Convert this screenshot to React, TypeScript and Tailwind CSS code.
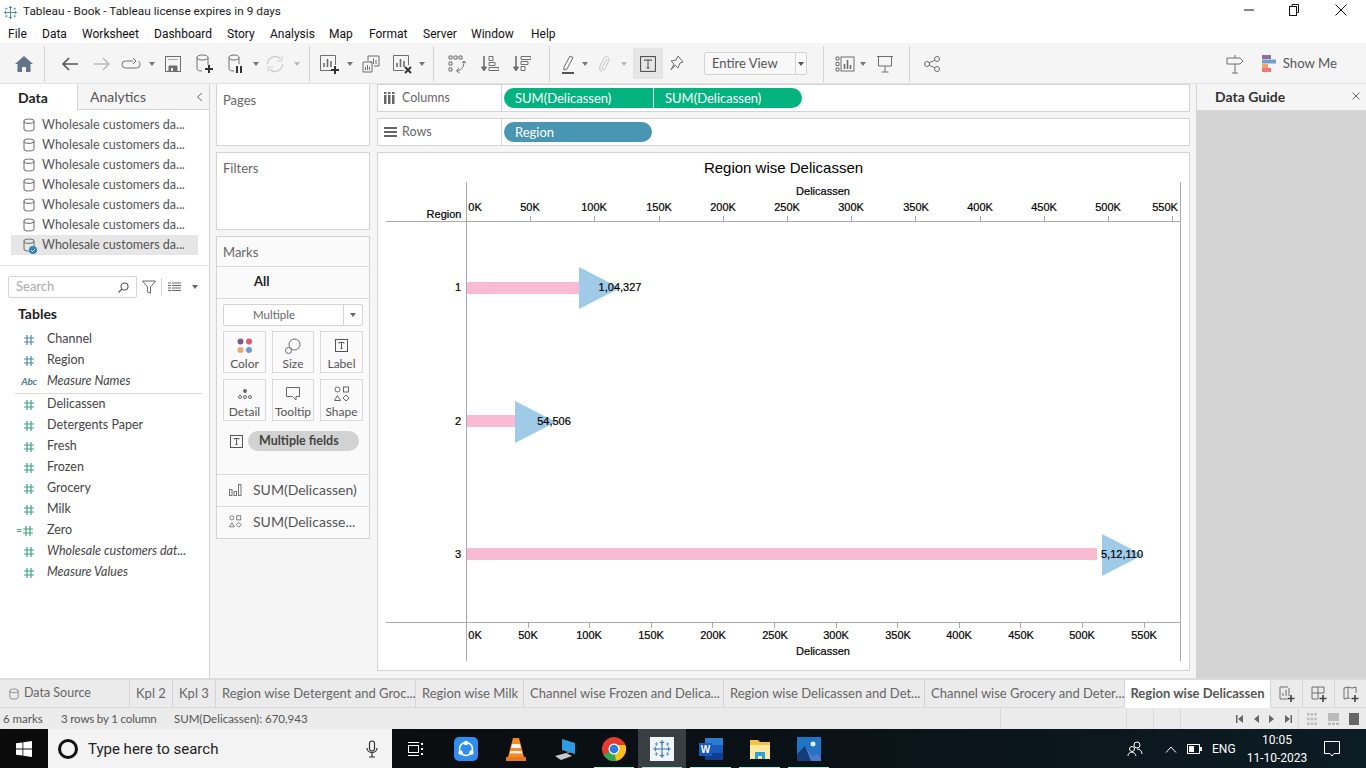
import type { ReactNode } from "react";

const UI = "font-['Lato','Open_Sans',sans-serif]";
const WIN = "font-['Roboto','Open_Sans',sans-serif]";

const MENU = [
  ["File", "w-[34px]"],
  ["Data", "w-[40px]"],
  ["Worksheet", "w-[72px]"],
  ["Dashboard", "w-[73px]"],
  ["Story", "w-[43px]"],
  ["Analysis", "w-[59px]"],
  ["Map", "w-[40px]"],
  ["Format", "w-[54px]"],
  ["Server", "w-[48px]"],
  ["Window", "w-[60px]"],
  ["Help", "w-[40px]"],
];

const MEASURES = ["Delicassen", "Detergents Paper", "Fresh", "Frozen", "Grocery", "Milk"];

const TABS = [
  ["Kpl 2", "w-[43px]"],
  ["Kpl 3", "w-[43px]"],
  ["Region wise Detergent and Groc...", "w-[200px]"],
  ["Region wise Milk", "w-[108px]"],
  ["Channel wise Frozen and Delica...", "w-[200px]"],
  ["Region wise Delicassen and Det...", "w-[201px]"],
  ["Channel wise Grocery and Deter...", "w-[200px]"],
];

const TOP_TICKS = [
  ["0K", 475],
  ["50K", 530],
  ["100K", 594],
  ["150K", 659],
  ["200K", 723],
  ["250K", 787],
  ["300K", 851],
  ["350K", 916],
  ["400K", 980],
  ["450K", 1044],
  ["500K", 1108],
  ["550K", 1165],
] as const;

const BOTTOM_TICKS = [
  ["0K", 475],
  ["50K", 528],
  ["100K", 589],
  ["150K", 651],
  ["200K", 713],
  ["250K", 775],
  ["300K", 836],
  ["350K", 898],
  ["400K", 959],
  ["450K", 1021],
  ["500K", 1082],
  ["550K", 1144],
] as const;

const MARKS = [
  { region: "1", y: 288, triY: 288, textY: 287, barEnd: 579, triX: 579, label: "1,04,327", labelX: 620 },
  { region: "2", y: 421, triY: 422, textY: 421, barEnd: 515, triX: 515, label: "54,506", labelX: 554 },
  { region: "3", y: 554, triY: 555, textY: 554, barEnd: 1097, triX: 1102, label: "5,12,110", labelX: 1122 },
];

function Ico({ w = 20, h = 20, children, className = "" }: { w?: number; h?: number; children: ReactNode; className?: string }) {
  return (
    <svg width={w} height={h} viewBox={`0 0 ${w} ${h}`} fill="none" stroke="#6e6e6e" strokeWidth="1" className={className}>
      {children}
    </svg>
  );
}

function Caret({ color = "#777" }: { color?: string }) {
  return (
    <svg width="6" height="4" viewBox="0 0 6 4">
      <path d="M0 0h6L3 4z" fill={color} />
    </svg>
  );
}

function Cell({ className, children }: { className: string; children?: ReactNode }) {
  return <div className={`flex items-center justify-center h-full shrink-0 ${className}`}>{children}</div>;
}

function Sep({ className = "" }: { className?: string }) {
  return (
    <div className={`flex items-center justify-center h-full shrink-0 ${className}`}>
      <div className="w-px h-[36px] bg-[#d4d4d4]" />
    </div>
  );
}

function Cylinder({ size = 14, color = "#777" }: { size?: number; color?: string }) {
  return (
    <svg width={size - 2} height={size} viewBox="0 0 12 14" fill="none" stroke={color} strokeWidth="1.1">
      <path d="M1 3.200C1 1.800 3 1 6 1s5 .8 5 2.200v7.600C11 12.200 9 13 6 13s-5-.8-5-2.200z" />
      <path d="M1 3.200C1 4.600 3 5.400 6 5.400s5-.8 5-2.200" />
    </svg>
  );
}

function Hash({ color }: { color: string }) {
  return (
    <svg width="12" height="12" viewBox="0 0 12 12" stroke={color} strokeWidth="1.2">
      <path d="M4 1v10M8 1v10M1 4h10M1 8h10" />
    </svg>
  );
}

function BarsPlus({ kind }: { kind: "plus" | "x" }) {
  return (
    <Ico w={22} h={22}>
      <path d="M12 17.500H1.500v-15h15V12" />
      <path d="M5 14V10M8.500 14V6M12 14V8" strokeWidth="1.6" />
      {kind === "plus" ? (
        <path d="M16 13v8M12 17h8" stroke="#333" strokeWidth="2" />
      ) : (
        <path d="M13 14l6 6M19 14l-6 6" stroke="#333" strokeWidth="2" />
      )}
    </Ico>
  );
}

function Toolbar() {
  return (
    <div className="h-[41px] bg-[#f5f5f5] flex items-center shrink-0 border-b border-[#e2e2e2] pt-px">
      <Cell className="ml-2 w-8">
        <svg width="18" height="16" viewBox="0 0 18 16">
          <path d="M9 0L0 8h2.500v8h4.500v-5h4v5h4.500V8H18z" fill="#5f7486" />
        </svg>
      </Cell>
      <Sep className="w-2" />
      <Cell className="ml-[6px] w-8">
        <Ico w={18} h={16}>
          <path d="M17 8H2M8 2L2 8l6 6" stroke="#555" strokeWidth="1.6" />
        </Ico>
      </Cell>
      <Cell className="w-8">
        <Ico w={18} h={16}>
          <path d="M1 8h15M10 2l6 6-6 6" stroke="#bbb" strokeWidth="1.6" />
        </Ico>
      </Cell>
      <Cell className="w-[26px]">
        <Ico w={20} h={14}>
          <path d="M12 4H4.500a3.500 3.500 0 0 0 0 7h11a3.500 3.500 0 0 0 3.500-3.500c0-1.500-.5-2.500-1.500-3.500" />
          <path d="M12 1l3 3-3 3" />
        </Ico>
      </Cell>
      <Cell className="w-4">
        <Caret />
      </Cell>
      <Cell className="w-[26px]">
        <Ico w={16} h={16}>
          <rect x="0.500" y="0.500" width="15" height="15" />
          <path d="M3 3.500h10" stroke="#aaa" />
          <path d="M4 15.500V10h8v5.500" fill="#6e6e6e" />
          <rect x="6" y="12" width="2" height="3" fill="#f5f5f5" stroke="none" />
        </Ico>
      </Cell>
      <Cell className="w-[38px]">
        <Ico w={18} h={20}>
          <path d="M1 3.500C1 2 3 1 6.500 1s5.500 1 5.500 2.500V11M1 3.500V15c0 1 1.500 2 5 2M1 3.500C1 5 3 6 6.500 6s5.500-1 5.500-2.500" />
          <path d="M13 11v8M9 15h8" stroke="#333" strokeWidth="2" />
        </Ico>
      </Cell>
      <Cell className="w-6">
        <Ico w={18} h={20}>
          <path d="M2 3.500C2 2 4 1 7 1s5 1 5 2.500V10M2 3.500V15c0 1 1.500 2 5 2M2 3.500C2 5 4 6 7 6s5-1 5-2.500" />
          <path d="M10 12v7M14 12v7" stroke="#333" strokeWidth="2" />
        </Ico>
      </Cell>
      <Cell className="w-4">
        <Caret />
      </Cell>
      <Cell className="w-[22px]">
        <Ico w={18} h={18}>
          <path d="M1.500 9a7.500 7.500 0 0 1 13-5M16.500 9a7.500 7.500 0 0 1-13 5" stroke="#cfcfcf" strokeWidth="1.400" />
          <path d="M16 1v5h-5M2 17v-5h5" stroke="#cfcfcf" />
        </Ico>
      </Cell>
      <Cell className="w-[22px]">
        <Caret color="#bbb" />
      </Cell>
      <Sep className="w-[2px]" />
      <Cell className="ml-1 w-8">
        <BarsPlus kind="plus" />
      </Cell>
      <Cell className="w-2">
        <Caret />
      </Cell>
      <Cell className="w-[34px]">
        <Ico w={18} h={18}>
          <path d="M6 6V1h11v10h-5" />
          <path d="M9 8V6M11.500 9V3.500M14 9V5" />
          <path d="M1 7h9v10H1z" />
          <path d="M3.500 15v-3M5.500 15v-5M7.500 15v-3" />
        </Ico>
      </Cell>
      <Cell className="w-[30px]">
        <BarsPlus kind="x" />
      </Cell>
      <Cell className="w-2">
        <Caret />
      </Cell>
      <Sep className="w-[14px]" />
      <Cell className="w-[34px]">
        <Ico w={20} h={20}>
          <path d="M2 2h3v3H2zM7 2h3v3H7zM12 2h3v3h-3zM2 8h3v3H2zM2 14h3v3H2z" />
          <path d="M17 8c0 4-2 8-7 9" />
          <path d="M12 14l-2.500 3 3 2M15 9l2-2 2 2" />
        </Ico>
      </Cell>
      <Cell className="w-8">
        <Ico w={18} h={18}>
          <path d="M3 1v14" strokeWidth="1.600" />
          <path d="M0.500 12L3 16l2.500-4z" fill="#6e6e6e" />
          <path d="M8 1.500h4v4H8zM8 7.500h6v3H8zM8 12.500h10v3H8z" />
        </Ico>
      </Cell>
      <Cell className="w-8">
        <Ico w={18} h={18}>
          <path d="M3 1v14" strokeWidth="1.600" />
          <path d="M0.500 12L3 16l2.500-4z" fill="#6e6e6e" />
          <path d="M8 1.500h10v3H8zM8 6.500h7v3H8zM8 11.500h4v4H8z" />
        </Ico>
      </Cell>
      <Sep className="w-[22px]" />
      <Cell className="w-4">
        <Ico w={14} h={20}>
          <path d="M3 13L9 2l3 1.500L6 15l-3 1z" />
          <path d="M1 19h12" stroke="#555" strokeWidth="2" />
        </Ico>
      </Cell>
      <Cell className="w-[18px]">
        <Caret />
      </Cell>
      <Cell className="w-[20px]">
        <Ico w={12} h={20}>
          <path d="M9 5l-5 9c-1 2 2 3 3 1l4-9c1-3-3-5-5-2L2 12c-1 3 0 5 2 6" stroke="#c4c4c4" />
        </Ico>
      </Cell>
      <Cell className="w-[19px]">
        <Caret color="#bbb" />
      </Cell>
      <Cell className="w-[30px] bg-[#e6e6e6] h-[31px]!">
        <Ico w={16} h={16}>
          <rect x="0.600" y="0.600" width="14.800" height="14.800" stroke="#444" />
          <path d="M4.500 5V4h7v1M8 4v8M6.500 12h3" stroke="#444" />
        </Ico>
      </Cell>
      <Cell className="w-7">
        <Ico w={16} h={18}>
          <path d="M9 1l5 6-3 1-2 5-3-3-4 5 3-6-3-3 5-1z" />
        </Ico>
      </Cell>
      <div className={`ml-[13px] w-[103px] h-[23px] flex border border-[#d4d4d4] rounded-[2px] bg-[#f8f8f8] text-[13px] text-[#555] items-center ${UI}`}>
        <div className="w-[91px] pl-[7px] border-r border-[#d4d4d4] h-full flex items-center">Entire View</div>
        <div className="flex-1 flex justify-center">
          <Caret color="#555" />
        </div>
      </div>
      <Sep className="w-[32px]" />
      <Cell className="w-[22px] -ml-[5px]">
        <Ico w={20} h={16}>
          <path d="M1 1h3v3H1zM1 6.500h3v3H1zM1 12h3v3H1z" />
          <rect x="6" y="1" width="13" height="14" />
          <path d="M9.500 13V8M12.500 13V4M15.500 13V9" strokeWidth="1.6" />
        </Ico>
      </Cell>
      <Cell className="w-[14px]">
        <Caret />
      </Cell>
      <Cell className="w-[30px]">
        <Ico w={18} h={18}>
          <path d="M1 1.500h16M2.500 1.500V11h13V1.500M9 11v6M5.500 17h7" />
        </Ico>
      </Cell>
      <Sep className="w-[18px]" />
      <Cell className="w-[26px] ml-[1px]">
        <Ico w={16} h={16}>
          <circle cx="3" cy="8" r="2.500" />
          <circle cx="13" cy="3" r="2.500" />
          <circle cx="13" cy="13" r="2.500" />
          <path d="M5 7l6-3M5 9l6 3" />
        </Ico>
      </Cell>
      <div className="ml-auto flex items-center h-full">
        <Ico w={20} h={20} className="mr-[17px]">
          <path d="M10 1v3M2 4h13l3 3-3 3H2zM10 10v9M7 19h6" />
        </Ico>
        <svg width="14" height="17" viewBox="0 0 14 17" className="mr-[7px]">
          <rect x="0" y="0" width="9" height="4" fill="#8d6f9f" />
          <rect x="0" y="4.500" width="14" height="4" fill="#6fa1cf" />
          <rect x="0" y="9" width="6" height="4" fill="#f2a564" />
          <rect x="0" y="13" width="9" height="4" fill="#f0747a" />
        </svg>
        <span className={`text-[13.2px] text-[#555] mr-[29px] ${UI}`}>Show Me</span>
      </div>
    </div>
  );
}

function DataPane() {
  return (
    <div className={`w-[210px] shrink-0 bg-white border-r border-[#d4d4d4] flex flex-col ${UI}`}>
      <div className="h-[26px] flex text-[14px]">
        <div className="w-[77px] pl-[18px] pt-[3px] font-bold text-[#222]">Data</div>
        <div className="flex-1 flex items-center pl-[12px] pr-[6px] bg-[#f5f5f5] border-l border-b border-[#d4d4d4] text-[#555] justify-between">
          <span>Analytics</span>
          <svg width="7" height="10" viewBox="0 0 7 10" fill="none" stroke="#666" strokeWidth="1">
            <path d="M6 1L1.500 5 6 9" />
          </svg>
        </div>
      </div>
      <div className="pt-[5px] pb-[10px] border-b border-[#e2e2e2]">
        {[0, 1, 2, 3, 4, 5, 6].map((i) => (
          <div
            key={i}
            className={`h-[20px] ml-[11px] w-[187px] flex items-center text-[12.5px] text-[#555] relative ${i === 6 ? "bg-[#e6e6e6]" : ""}`}
          >
            <div className="w-[31px] pl-[12px] flex">
              <Cylinder />
            </div>
            Wholesale customers da...
            {i === 6 && (
              <svg width="8" height="8" viewBox="0 0 8 8" className="absolute left-[18px] top-[11px]">
                <circle cx="4" cy="4" r="4" fill="#2f86b4" />
                <path d="M2 4l1.500 1.500L6 3" stroke="#fff" fill="none" />
              </svg>
            )}
          </div>
        ))}
      </div>
      <div className="flex items-center h-[22px] mt-[10px] ml-[8px]">
        <div className="w-[129px] h-[22px] border border-[#d4d4d4] rounded-[2px] flex items-center justify-between px-[7px] text-[13px] text-[#aaa]">
          <span>Search</span>
          <svg width="11" height="11" viewBox="0 0 11 11" fill="none" stroke="#555" strokeWidth="1.100">
            <circle cx="6.500" cy="4.500" r="3.500" />
            <path d="M4 7l-3.500 3.500" />
          </svg>
        </div>
        <svg width="14" height="14" viewBox="0 0 14 14" fill="none" stroke="#666" className="ml-[5px]">
          <path d="M0.500 1h13L8.500 7v6l-3-1V7z" />
        </svg>
        <div className="w-px h-[18px] bg-[#d4d4d4] ml-[5px]" />
        <svg width="13" height="10" viewBox="0 0 13 10" stroke="#666" className="ml-[6px]">
          <path d="M0 1h3M4 1h9M0 3.500h3M4 3.500h9M0 6h3M4 6h9M0 8.500h3M4 8.500h9" />
        </svg>
        <div className="ml-[11px]">
          <Caret color="#666" />
        </div>
      </div>
      <div className="pl-[18px] mt-[5px] text-[14px] font-bold text-[#222] h-[20px]">Tables</div>
      <div className="text-[12.5px] text-[#444] mt-[6px]">
        <FieldRow icon={<Hash color="#4f8aa3" />} label="Channel" />
        <FieldRow icon={<Hash color="#4f8aa3" />} label="Region" />
        <FieldRow
          icon={<span className="text-[10px] text-[#4f7f95] font-bold tracking-tight">Abc</span>}
          label="Measure Names"
          italic
        />
        <div className="h-px bg-[#d9d9d9] ml-[15px] mr-[7px] mt-[1px] -mb-[1px]" />
        <div className="h-[1px]" />
        {MEASURES.map((m) => (
          <FieldRow key={m} icon={<Hash color="#3fa285" />} label={m} />
        ))}
        <FieldRow
          icon={
            <span className="flex items-center -ml-[8px]">
              <span className="text-[9px] leading-none text-[#3fa285] font-bold">=</span>
              <Hash color="#3fa285" />
            </span>
          }
          label="Zero"
        />
        <FieldRow icon={<Hash color="#3fa285" />} label="Wholesale customers dat..." italic />
        <FieldRow icon={<Hash color="#3fa285" />} label="Measure Values" italic />
      </div>
    </div>
  );
}

function FieldRow({ icon, label, italic }: { icon: ReactNode; label: string; italic?: boolean }) {
  return (
    <div className={`h-[21px] flex items-center ${italic ? "italic" : ""}`}>
      <div className="w-[47px] pl-[20px] flex justify-start">
        <div className="w-[18px] flex justify-center">{icon}</div>
      </div>
      {label}
    </div>
  );
}

function MarkBtn({ label, icon }: { label: string; icon: ReactNode }) {
  return (
    <div className="h-[42px] border border-[#d9d9d9] flex flex-col items-center text-[12px] text-[#555]">
      <div className="h-[24px] flex items-center justify-center pt-[3px] shrink-0">{icon}</div>
      <div className="leading-[15px]">{label}</div>
    </div>
  );
}

function ShapeIcon({ size = 16 }: { size?: number }) {
  return (
    <svg width={size} height={size} viewBox="0 0 16 16" fill="none" stroke="#666">
      <circle cx="3.500" cy="3.500" r="2.500" />
      <rect x="9.500" y="1" width="5" height="5" />
      <path d="M3.500 9.500l3 5h-6zM12 9l3 3-3 3-3-3z" />
    </svg>
  );
}

function TIcon() {
  return (
    <svg width="13" height="13" viewBox="0 0 13 13" fill="none" stroke="#555">
      <rect x="0.500" y="0.500" width="12" height="12" />
      <path d="M4 4.500V3.500h5v1M6.500 3.500v6M5.500 9.500h2" />
    </svg>
  );
}

function CardsColumn() {
  return (
    <div className={`w-[154px] shrink-0 ml-[6px] flex flex-col gap-[6px] pb-[139px] ${UI}`}>
      <div className="h-[62px] bg-white border border-[#d4d4d4] border-t-0 pl-[6px] pt-[7px] text-[13px] text-[#666]">Pages</div>
      <div className="h-[78px] bg-white border border-[#d4d4d4] pl-[6px] pt-[6px] text-[13px] text-[#666]">Filters</div>
      <div className="h-[303px] bg-[#fafafa] border border-[#d4d4d4] flex flex-col text-[#555]">
        <div className="h-[30px] pl-[6px] pt-[2px] flex items-center text-[13px] border-b border-[#d9d9d9] text-[#666]">Marks</div>
        <div className="h-[32px] pl-[37px] pb-[2px] flex items-center text-[13px] font-bold text-[#222] border-b border-[#d9d9d9]">All</div>
        <div className="mx-[6px] mt-[5px] h-[22px] border border-[#d4d4d4] rounded-[2px] flex items-center bg-white text-[11.5px] text-[#666]">
          <div className="w-[120px] pl-[29px] border-r border-[#d4d4d4] h-full leading-[20px]">Multiple</div>
          <div className="flex-1 flex justify-center">
            <Caret color="#666" />
          </div>
        </div>
        <div className="mx-[6px] mt-[5px] grid grid-cols-[43px_42px_43px] gap-x-[6px] gap-y-[6px]">
          <MarkBtn
            label="Color"
            icon={
              <svg width="16" height="16" viewBox="0 0 16 16">
                <circle cx="3.500" cy="3.500" r="3" fill="#7b5a8e" />
                <circle cx="12" cy="3.500" r="3" fill="#e15a6a" />
                <circle cx="3.500" cy="12" r="3" fill="#f0a46a" />
                <circle cx="12" cy="12" r="3" fill="#6c9ccc" />
              </svg>
            }
          />
          <MarkBtn
            label="Size"
            icon={
              <svg width="16" height="16" viewBox="0 0 16 16" fill="none" stroke="#666">
                <circle cx="9.500" cy="6.500" r="5.500" />
                <circle cx="3.500" cy="12.500" r="3" fill="#fafafa" />
              </svg>
            }
          />
          <MarkBtn label="Label" icon={<TIcon />} />
          <MarkBtn
            label="Detail"
            icon={
              <svg width="14" height="12" viewBox="0 0 14 12" fill="none" stroke="#666">
                <circle cx="7" cy="3" r="2" fill="#666" stroke="none" />
                <circle cx="2" cy="9" r="1.500" />
                <circle cx="7" cy="9" r="1.500" />
                <circle cx="12" cy="9" r="1.500" />
              </svg>
            }
          />
          <MarkBtn
            label="Tooltip"
            icon={
              <svg width="14" height="14" viewBox="0 0 14 14" fill="none" stroke="#666">
                <path d="M0.500 0.500h13v9H10V13L6.500 9.500H0.500z" />
              </svg>
            }
          />
          <MarkBtn label="Shape" icon={<ShapeIcon />} />
        </div>
        <div className="h-[20px] mt-[10px] ml-[13px] flex items-center">
          <TIcon />
          <div className="ml-[5px] w-[111px] h-[20px] rounded-full bg-[#d2d2d2] pl-[11px] text-[12.5px] font-bold text-[#444] leading-[20px]">
            Multiple fields
          </div>
        </div>
        <div className="mt-[23px] h-[32px] pb-[2px] border-t border-[#d9d9d9] flex items-center text-[14px]">
          <div className="w-[36px] pl-[12px] flex">
            <svg width="13" height="12" viewBox="0 0 13 12" fill="none" stroke="#777">
              <rect x="0.500" y="5.500" width="2.500" height="6" />
              <rect x="5" y="7.500" width="2.500" height="4" />
              <rect x="9.500" y="0.500" width="2.500" height="11" />
            </svg>
          </div>
          SUM(Delicassen)
        </div>
        <div className="flex-1 pb-[2px] border-t border-[#d9d9d9] flex items-center text-[14px]">
          <div className="w-[36px] pl-[12px] flex">
            <ShapeIcon size={13} />
          </div>
          SUM(Delicasse...
        </div>
      </div>
    </div>
  );
}

function Shelf({ icon, label, children }: { icon: ReactNode; label: string; children: ReactNode }) {
  return (
    <div className="h-[28px] bg-white border border-[#d4d4d4] flex items-center text-[12.5px]">
      <div className="w-[124px] h-full border-r border-[#d4d4d4] flex items-center text-[#666]">
        <div className="w-[24px] pl-[6px] flex">{icon}</div>
        {label}
      </div>
      <div className="pl-[2px] flex gap-px">{children}</div>
    </div>
  );
}

function Label({ x, y, children, className = "" }: { x: number; y: number; children: ReactNode; className?: string }) {
  // x is the centre of the text, y its middle, in page pixels
  return (
    <span
      className={`absolute -translate-x-1/2 -translate-y-1/2 whitespace-nowrap text-[11px] leading-none text-black [-webkit-text-stroke:0.2px_black] ${className}`}
      style={{ left: x - 378, top: y - 153 }}
    >
      {children}
    </span>
  );
}

function Chart() {
  const ticks = [1, 2, 3, 4, 5, 6, 7, 8, 9, 10, 11];
  return (
    <div className="relative h-[519px] bg-white border border-[#d4d4d4] overflow-hidden font-['Liberation_Sans',Arial,sans-serif]">
      <svg width="813" height="518" viewBox="378 153 813 518" className="absolute left-0 top-0">
        <g stroke="#aaa" strokeWidth="1">
          <path d="M386 221.500H1180M386 622.500H1180M466.500 182V661M1180.500 182V661" />
          {ticks.map((k) => (
            <path key={k} d={`M${Math.round(466 + 64.2 * k) + 0.5} 216V221`} />
          ))}
          {ticks.map((k) => (
            <path key={k} d={`M${Math.round(466 + 61.6 * k) + 0.5} 622V628`} />
          ))}
        </g>
        {MARKS.map((m) => (
          <g key={m.region}>
            <rect x="467" y={m.y - 6} width={m.barEnd - 467} height="12" fill="#f9bbd1" />
            <path d={`M${m.triX} ${m.triY - 21}L${m.triX + 41} ${m.triY}L${m.triX} ${m.triY + 21}z`} fill="#a0cbe8" />
          </g>
        ))}
      </svg>
      <span className="absolute left-0 right-0 top-[6px] text-center text-[15px] leading-[18px] text-black">Region wise Delicassen</span>
      <Label x={823} y={191}>Delicassen</Label>
      <Label x={823} y={651}>Delicassen</Label>
      <Label x={444} y={214}>Region</Label>
      {TOP_TICKS.map(([t, x]) => (
        <Label key={t} x={x} y={207}>{t}</Label>
      ))}
      {BOTTOM_TICKS.map(([t, x]) => (
        <Label key={t} x={x} y={635}>{t}</Label>
      ))}
      {MARKS.map((m) => (
        <span key={m.region}>
          <Label x={458} y={m.textY}>{m.region}</Label>
          <Label x={m.labelX} y={m.textY}>{m.label}</Label>
        </span>
      ))}
    </div>
  );
}

function Center() {
  return (
    <div className={`w-[813px] shrink-0 ml-[7px] flex flex-col gap-[6px] ${UI}`}>
      <Shelf
        label="Columns"
        icon={
          <svg width="11" height="12" viewBox="0 0 11 12" fill="#666">
            <rect x="0" y="3" width="2.500" height="9" />
            <rect x="4" y="3" width="2.500" height="9" />
            <rect x="8" y="3" width="2.500" height="9" />
            <rect x="0" y="0" width="2.500" height="2" />
            <rect x="4" y="0" width="2.500" height="2" />
            <rect x="8" y="0" width="2.500" height="2" />
          </svg>
        }
      >
        <div className="w-[149px] h-[20px] bg-[#03b37f] rounded-l-full pl-[11px] text-[13px] text-white leading-[20px]">SUM(Delicassen)</div>
        <div className="w-[148px] h-[20px] bg-[#03b37f] rounded-r-full pl-[11px] text-[13px] text-white leading-[20px]">SUM(Delicassen)</div>
      </Shelf>
      <Shelf
        label="Rows"
        icon={
          <svg width="13" height="10" viewBox="0 0 13 10" fill="#666">
            <rect x="0" y="0" width="13" height="2" />
            <rect x="0" y="4" width="13" height="2" />
            <rect x="0" y="8" width="13" height="2" />
          </svg>
        }
      >
        <div className="w-[148px] h-[20px] bg-[#4996b2] rounded-full pl-[11px] text-[13px] text-white leading-[20px]">Region</div>
      </Shelf>
      <Chart />
    </div>
  );
}

function TabsBar() {
  return (
    <div className={`h-[30px] flex shrink-0 bg-[#ebebeb] border-t-2 border-b border-[#dcdcdc] text-[13px] text-[#666] ${UI}`}>
      <div className="w-[130px] border-r border-[#d4d4d4] flex items-center pl-[9px] gap-[5px] text-[12.5px]">
        <Cylinder size={12} color="#888" />
        Data Source
      </div>
      {TABS.map(([t, w]) => (
        <div key={t} className={`${w} border-r border-[#d4d4d4] flex items-center pl-[6px] whitespace-nowrap`}>
          {t}
        </div>
      ))}
      <div className="w-[145px] bg-white flex items-center justify-center font-bold text-[#555] whitespace-nowrap -mb-px">
        Region wise Delicassen
      </div>
      {["a", "b", "c"].map((k) => (
        <div key={k} className="w-[32px] border-l border-[#d4d4d4] flex items-center justify-center">
          <Ico w={16} h={16}>
            {k === "a" && <path d="M9 1H1v12h7M4 10V7M7 10V4M10 10V2" />}
            {k === "b" && <path d="M1 1h12v6M1 1v12h6M7 1v12M1 7h12" />}
            {k === "c" && <path d="M1 2l4 -1 4 1 4-1v6M1 2v11l4-1 2 .5M5 1v11" />}
            <path d="M12 9v7M8.500 12.500h7" stroke="#444" strokeWidth="1.600" />
          </Ico>
        </div>
      ))}
    </div>
  );
}

function StatusBar() {
  return (
    <div className={`h-[21px] flex shrink-0 items-center bg-[#ebebeb] text-[11.5px] text-[#555] ${UI}`}>
      <span className="w-[61px] pl-[3px]">6 marks</span>
      <span className="w-[113px] tracking-[-0.15px]">3 rows by 1 column</span>
      <span className="w-[826px]">SUM(Delicassen): 670,943</span>
      {["w-[126px]", "w-[27px]", "w-[27px]"].map((w, i) => (
        <div key={i} className={`${w} h-full border-l border-[#d9d9d9]`} />
      ))}
      <div className="flex-1 h-full border-l border-[#d9d9d9] flex items-center pl-[55px] gap-[6px]">
        <svg width="56" height="8" viewBox="0 0 56 8" fill="#666">
          <path d="M0 0h1.500v8H0zM7 0v8L2 4zM23 0v8l-5-4zM33 0v8l5-4zM49 0v8l5-4zM54.500 0H56v8h-1.500z" />
        </svg>
        <div className="w-px h-full bg-[#d9d9d9]" />
        <svg width="52" height="12" viewBox="0 0 52 12" fill="#bbb" className="ml-[2px]">
          <path d="M0 0h2.500v2.500H0zM3.700 0h2.500v2.500H3.700zM7.400 0h2.500v2.500H7.400zM0 4.700h2.500v2.500H0zM3.700 4.700h2.500v2.500H3.700zM7.400 4.700h2.500v2.500H7.400zM0 9.400h2.500v2.500H0zM3.700 9.400h2.500v2.500H3.700zM7.400 9.400h2.500v2.500H7.400z" />
          <path d="M21 0h11v8H21zM21 9.500h3V12h-3zM25 9.500h3V12h-3zM29 9.500h3V12h-3z" />
          <path d="M42 0h10v12H42z" fill="#666" />
        </svg>
      </div>
    </div>
  );
}

function TaskSlot({ className, active, running = true, children }: { className: string; active?: boolean; running?: boolean; children: ReactNode }) {
  return (
    <div className={`relative h-full flex items-center justify-center shrink-0 ${className} ${active ? "bg-[#3a3f44]" : ""}`}>
      {children}
      {running && <div className="absolute bottom-0 left-[4px] right-[4px] h-[2px] bg-[#a8f0dc]" />}
    </div>
  );
}

function Taskbar() {
  return (
    <div className={`h-[40px] shrink-0 flex items-center bg-gradient-to-r from-[#0b0b0b] via-[#0a1014] to-[#0c1c24] text-white ${WIN}`}>
      <div className="w-[48px] flex justify-center">
        <svg width="16" height="16" viewBox="0 0 16 16" fill="#fff">
          <path d="M0 2.300l6.500-.9v6.200H0zM7.300 1.300L16 0v7.600H7.300zM0 8.400h6.500v6.200L0 13.700zM7.300 8.400H16V16l-8.700-1.200z" />
        </svg>
      </div>
      <div className="w-[344px] h-full bg-[#f3f3f3] flex items-center text-[15px] text-[#222]">
        <div className="w-[20px] h-[20px] rounded-full border-[3px] border-[#111] ml-[10px] mr-[10px]" />
        <span className="flex-1">Type here to search</span>
        <svg width="12" height="18" viewBox="0 0 12 18" fill="none" stroke="#333" strokeWidth="1.200" className="mr-[14px]">
          <rect x="3.500" y="1" width="5" height="10" rx="2.500" />
          <path d="M1 8c0 6 10 6 10 0M6 13v4M3 17h6" />
        </svg>
      </div>
      <TaskSlot className="w-[48px]" running={false}>
        <svg width="16" height="16" viewBox="0 0 16 16" fill="none" stroke="#fff">
          <path d="M0 1.500h11M0 14.500h11" />
          <rect x="0.500" y="4.500" width="10" height="7" />
          <path d="M14 2v2M14 7v2M14 12v2" strokeWidth="2" />
        </svg>
      </TaskSlot>
      <TaskSlot className="w-[52px]" running={false}>
        <svg width="24" height="24" viewBox="0 0 24 24">
          <rect width="24" height="24" rx="5" fill="#2f8df0" />
          <circle cx="12" cy="12" r="6.500" fill="none" stroke="#fff" strokeWidth="1.600" />
          <circle cx="12" cy="6" r="2.200" fill="#fff" />
          <circle cx="6.500" cy="15.500" r="2.200" fill="#fff" />
          <circle cx="17.500" cy="15.500" r="2.200" fill="#fff" />
        </svg>
      </TaskSlot>
      <TaskSlot className="w-[48px]" running={false}>
        <svg width="20" height="24" viewBox="0 0 20 24">
          <path d="M7 1h6l5 19H2z" fill="#f58a1f" />
          <path d="M6 7h8l1 4H5zM4.500 14h11l.7 2.500H3.800z" fill="#f2f2f2" />
          <path d="M0 20h20v4H0z" fill="#e8781a" />
        </svg>
      </TaskSlot>
      <TaskSlot className="w-[50px]" running={false}>
        <svg width="24" height="24" viewBox="0 0 24 24">
          <path d="M9 2l13 4v11L9 13z" fill="#2e9be0" />
          <path d="M2 19l11-3 6 3-11 4z" fill="#c8c8c8" />
          <path d="M14 14l4 1-4 2z" fill="#777" />
        </svg>
      </TaskSlot>
      <TaskSlot className="w-[48px]">
        <svg width="24" height="24" viewBox="0 0 24 24">
          <circle cx="12" cy="12" r="12" fill="#e33b2e" />
          <path d="M12 12L1.600 18A12 12 0 0 0 14 23.800z" fill="#2fa84f" />
          <path d="M12 12l2 11.800A12 12 0 0 0 23.400 8H12z" fill="#fbc116" />
          <circle cx="12" cy="12" r="5.500" fill="#fff" />
          <circle cx="12" cy="12" r="4.300" fill="#2a7de1" />
        </svg>
      </TaskSlot>
      <TaskSlot className="w-[48px]" active>
        <div className="w-[24px] h-[24px] bg-[#f0f4f8] flex items-center justify-center">
          <TableauLogo size={20} />
        </div>
      </TaskSlot>
      <TaskSlot className="w-[49px]">
        <svg width="24" height="24" viewBox="0 0 24 24">
          <rect x="6" y="1" width="18" height="22" fill="#2b7cd3" />
          <rect x="6" y="8" width="18" height="8" fill="#185abd" />
          <rect x="6" y="16" width="18" height="7" fill="#103f91" />
          <rect x="0" y="6" width="13" height="13" fill="#185abd" />
          <text x="6.500" y="16" textAnchor="middle" fontSize="10" fontWeight="bold" fill="#fff" fontFamily="Liberation Sans">W</text>
        </svg>
      </TaskSlot>
      <TaskSlot className="w-[49px]">
        <svg width="24" height="24" viewBox="0 0 24 24">
          <path d="M2 3h8l2 2h10v17H2z" fill="#f5c242" />
          <path d="M2 8h20v14H2z" fill="#fde9a0" />
          <path d="M7 15h10v7h-3v-3h-4v3H7z" fill="#2ba3d8" />
        </svg>
      </TaskSlot>
      <TaskSlot className="w-[49px]">
        <svg width="24" height="24" viewBox="0 0 24 24">
          <rect width="24" height="24" fill="#1f74c4" />
          <circle cx="16" cy="7" r="2.500" fill="#e8f2fb" />
          <path d="M0 24V17l8-8 8 10 4-3 4 4v4z" fill="#123f7a" />
          <path d="M8 9l8 10 4-3 4 4v4H14z" fill="#4f78c9" />
        </svg>
      </TaskSlot>
      <div className="ml-auto flex items-center h-full text-[12px]">
        <svg width="16" height="16" viewBox="0 0 16 16" fill="none" stroke="#fff" className="mr-[22px]">
          <circle cx="10" cy="4" r="3" />
          <circle cx="5" cy="8" r="2.500" />
          <path d="M1 15c0-5 7-5 8 0M10 8c3 0 5 2 5 5" />
        </svg>
        <svg width="12" height="7" viewBox="0 0 12 7" fill="none" stroke="#fff" className="mr-[10px]">
          <path d="M1 6.500L6 1l5 5.500" />
        </svg>
        <svg width="15" height="10" viewBox="0 0 15 10" className="mr-[10px]">
          <rect x="0.500" y="0.500" width="12" height="9" fill="none" stroke="#fff" />
          <rect x="2" y="2" width="5" height="6" fill="#fff" />
          <rect x="13" y="3" width="2" height="4" fill="#fff" />
        </svg>
        <span className="w-[24px] mr-[9px]">ENG</span>
        <div className="w-[64px] text-center leading-[18px] mr-[15px] whitespace-nowrap">
          <div>10:05</div>
          <div>11-10-2023</div>
        </div>
        <svg width="16" height="16" viewBox="0 0 16 16" fill="none" stroke="#fff" className="mr-[26px]">
          <path d="M0.500 0.500h15v12H10l-2 2.500-2-2.500H0.500z" />
        </svg>
      </div>
    </div>
  );
}

function TableauLogo({ size = 18 }: { size?: number }) {
  return (
    <svg width={size} height={size} viewBox="0 0 18 18" stroke="#3f7fa3" strokeWidth="1">
      <path d="M9 4v10M4 9h10" stroke="#3f7fa3" />
      <path d="M9 1v4M7 3h4M9 13v4M7 15h4M1 9h4M3 7v4M13 9h4M15 7v4" />
      <path d="M4 3v3M2.500 4.500h3M14 3v3M12.500 4.500h3M4 12v3M2.500 13.500h3M14 12v3M12.500 13.500h3" stroke="#5a9bbd" />
    </svg>
  );
}

export default function App() {
  return (
    <div className="w-[1366px] h-[768px] overflow-hidden flex flex-col bg-white">
      <div className={`h-[24px] shrink-0 flex items-center text-[11.8px] text-[#222] ${WIN}`}>
        <div className="w-[23px] pl-[3px] flex">
          <TableauLogo size={15} />
        </div>
        Tableau - Book - Tableau license expires in 9 days
        <div className="ml-auto flex items-center -mt-[4px]">
          <svg width="10" height="2" viewBox="0 0 10 2" className="mr-[35px]">
            <path d="M0 1h10" stroke="#111" />
          </svg>
          <svg width="10" height="12" viewBox="0 0 10 12" fill="none" stroke="#111" className="mr-[36px]">
            <path d="M3 2.500V.5h6.500v8H7.500" />
            <rect x="0.500" y="2.500" width="7" height="9" />
          </svg>
          <svg width="12" height="12" viewBox="0 0 12 12" stroke="#111" className="mr-[19px]">
            <path d="M0.500 0.500l11 11M11.500 0.500l-11 11" />
          </svg>
        </div>
      </div>
      <div className={`h-[19px] shrink-0 flex items-center pl-[8px] text-[12px] text-[#111] ${WIN}`}>
        {MENU.map(([m, w]) => (
          <div key={m} className={w}>
            {m}
          </div>
        ))}
      </div>
      <Toolbar />
      <div className="h-[594px] shrink-0 flex bg-[#f5f5f5] overflow-hidden">
        <DataPane />
        <div className="flex flex-col">
          <CardsColumn />
        </div>
        <Center />
        <div className={`w-[170px] ml-[6px] flex flex-col bg-[#d4d4d4] border-l border-[#d4d4d4] ${UI}`}>
          <div className="h-[26px] pb-[2px] bg-[#f5f5f5] flex items-center justify-between pl-[18px] pr-[6px] text-[14px] font-bold text-[#333]">
            Data Guide
            <svg width="8" height="8" viewBox="0 0 8 8" stroke="#666">
              <path d="M0.500 0.500l7 7M7.500 0.500l-7 7" />
            </svg>
          </div>
        </div>
      </div>
      <TabsBar />
      <StatusBar />
      <Taskbar />
    </div>
  );
}
